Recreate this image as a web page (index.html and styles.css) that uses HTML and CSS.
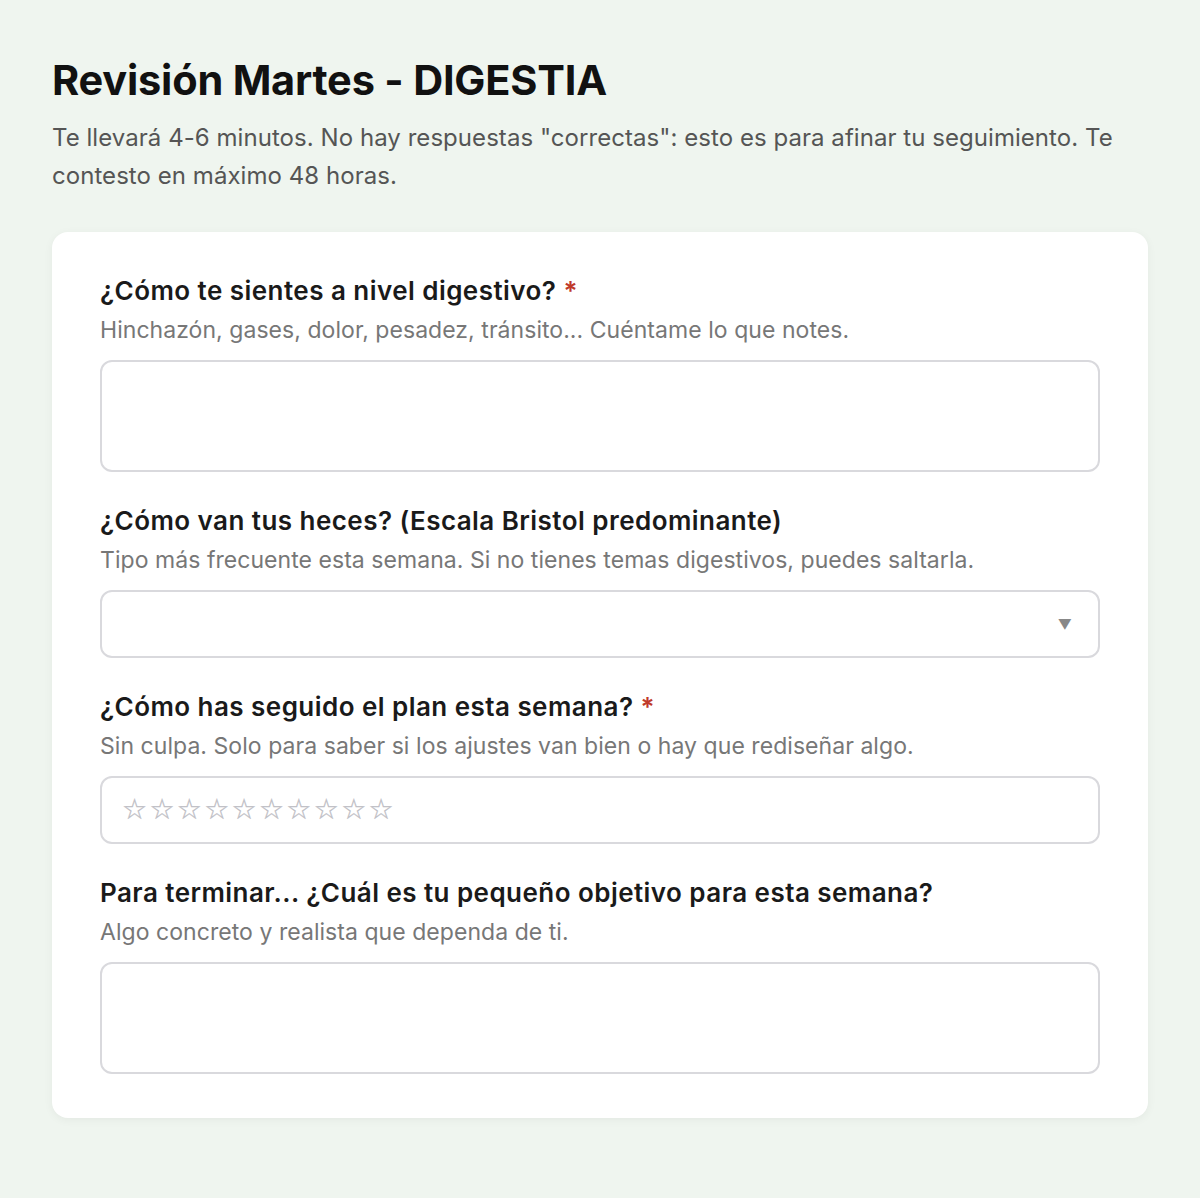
FILE: index.html
```html
<!DOCTYPE html>
<html lang="es">
<head>
<meta charset="utf-8">
<title>Revisión Martes - DIGESTIA</title>
<link rel="stylesheet" href="styles.css">
</head>
<body>
<main class="page">
  <header class="intro">
    <h1 class="title">Revisión Martes - DIGESTIA</h1>
    <p class="lead">Te llevará 4-6 minutos. No hay respuestas "correctas": esto es para afinar tu seguimiento. Te contesto en máximo 48 horas.</p>
  </header>
  <form class="card">
    <div class="field">
      <label class="label">¿Cómo te sientes a nivel digestivo? <span class="req">*</span></label>
      <p class="hint">Hinchazón, gases, dolor, pesadez, tránsito... Cuéntame lo que notes.</p>
      <textarea class="input area"></textarea>
    </div>
    <div class="field">
      <label class="label">¿Cómo van tus heces? (Escala Bristol predominante)</label>
      <p class="hint">Tipo más frecuente esta semana. Si no tienes temas digestivos, puedes saltarla.</p>
      <div class="input select"><span class="caret">▼</span></div>
    </div>
    <div class="field">
      <label class="label">¿Cómo has seguido el plan esta semana? <span class="req">*</span></label>
      <p class="hint">Sin culpa. Solo para saber si los ajustes van bien o hay que rediseñar algo.</p>
      <div class="input stars"><span>☆</span><span>☆</span><span>☆</span><span>☆</span><span>☆</span><span>☆</span><span>☆</span><span>☆</span><span>☆</span><span>☆</span></div>
    </div>
    <div class="field">
      <label class="label">Para terminar... ¿Cuál es tu pequeño objetivo para esta semana?</label>
      <p class="hint">Algo concreto y realista que dependa de ti.</p>
      <textarea class="input area"></textarea>
    </div>
  </form>
</main>
</body>
</html>
```

FILE: styles.css
```css
* { box-sizing: border-box; }
html, body { margin: 0; padding: 0; }
body {
  background: #eff5ef;
  font-family: Inter, "Noto Sans", sans-serif;
  color: #1a1a1a;
}
.page {
  padding: 52px 52px 80px 52px;
}
.intro { margin-bottom: 37px; }
.title {
  margin: 0;
  font-size: 41.5px;
  line-height: 56px;
  font-weight: 700;
  color: #111;
  letter-spacing: -0.2px;
}
.lead {
  margin: 11px 0 0 0;
  font-size: 24px;
  line-height: 38px;
  letter-spacing: 0.05px;
  color: #555;
  font-weight: 400;
}
.card {
  background: #fff;
  border-radius: 16px;
  padding: 43px 48px 44px 48px;
  box-shadow: 0 2px 10px rgba(0,0,0,0.05);
  display: flex;
  flex-direction: column;
  gap: 33px;
}
.field { display: flex; flex-direction: column; }
.label {
  display: block;
  font-size: 26px;
  line-height: 32px;
  font-weight: 600;
  letter-spacing: 0.45px;
  color: #1a1a1a;
}
.req { color: #c0392b; }
.hint {
  margin: 8px 0 15px 0;
  font-size: 23px;
  line-height: 30px;
  letter-spacing: 0.05px;
  color: #777;
}
.input {
  display: block;
  width: 100%;
  border: 2px solid #d9d9dd;
  border-radius: 12px;
  background: #fff;
  font: inherit;
  resize: none;
}
.area { height: 112px; }
.select {
  height: 68px;
  display: flex;
  align-items: center;
  justify-content: flex-end;
  padding-right: 26px;
}
.caret { color: #888; font-size: 14px; }
.stars {
  height: 68px;
  display: flex;
  align-items: center;
  padding-left: 20px;
}
.stars span {
  display: block;
  width: 27.4px;
  color: #bdbdc4;
  font-size: 28px;
  line-height: 1;
  font-family: "DejaVu Sans", sans-serif;
  -webkit-text-stroke: 0.3px #bdbdc4;
}
```
